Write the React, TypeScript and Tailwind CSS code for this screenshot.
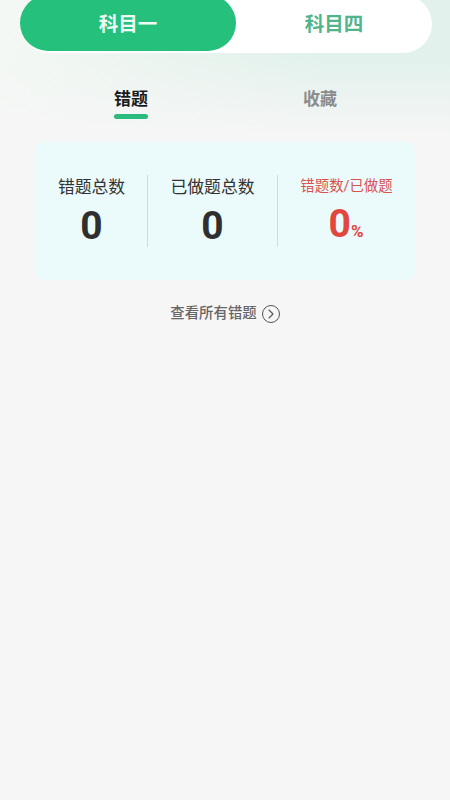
import { ChevronRight } from "lucide-react";

const stats = [
  { label: "错题总数", value: "0" },
  { label: "已做题总数", value: "0" },
];

export default function App() {
  return (
    <div className="h-[800px] w-[450px] overflow-hidden bg-[#f6f6f6] font-['Roboto','Noto_Sans_CJK_SC',sans-serif]">
      <div className="h-[155px] bg-[linear-gradient(to_bottom,rgba(246,246,246,0)_40%,#f6f6f6_92%),linear-gradient(100deg,#f4f8f4_0%,#e2f1eb_70%,#e2f1eb_100%)]">
        <div className="ml-5 -mt-[5px] flex h-[58px] w-[412px] rounded-[29px] bg-white">
          <div className="flex h-[56px] w-[216px] items-center justify-center rounded-[28px] bg-[#24c07c] pt-[3px] text-[19.5px] font-bold text-[#eefaf4]">
            科目一
          </div>
          <div className="flex h-[56px] flex-1 items-center justify-center pt-[3px] text-[19.5px] font-bold text-[#52b48c]">
            科目四
          </div>
        </div>

        <div className="mt-[32px] flex text-[17px] font-bold">
          <div className="ml-[114px] flex w-[34px] flex-col items-center">
            <span className="whitespace-nowrap leading-[28px] text-[#1b1b1b]">错题</span>
            <span className="mt-[1px] h-[5px] w-[34px] rounded-full bg-[#2bbb7e]" />
          </div>
          <span className="ml-[155px] whitespace-nowrap leading-[28px] text-[#8b8b8b]">收藏</span>
        </div>
      </div>

      <div className="ml-9 -mt-2 flex h-[138px] w-[379px] items-center rounded-lg bg-[#ebfafb]">
        {stats.map((s, i) => (
          <div
            key={s.label}
            className={
              i === 0
                ? "flex h-[72px] w-[112px] flex-col items-center border-r border-[#cfdcdd]"
                : "flex h-[72px] w-[130px] flex-col items-center border-r border-[#cfdcdd]"
            }
          >
            <span className="text-[16.8px] leading-[24px] text-[#333333]">{s.label}</span>
            <span className="mt-[4px] text-[39px] font-bold leading-[46px] text-[#2f2f2f]">{s.value}</span>
          </div>
        ))}
        <div className="flex h-[72px] flex-1 flex-col items-center">
          <span className="text-[14.4px] leading-[24px] text-[#d9534f]">错题数/已做题</span>
          <span className="mt-[2px] -ml-[1px] leading-[46px] text-[#e2463c]">
            <span className="text-[39px] font-bold">0</span>
            <span className="text-[17px] font-bold">%</span>
          </span>
        </div>
      </div>

      <div className="mt-[22px] flex items-center justify-center gap-[5px] text-[14.4px] font-medium text-[#666666]">
        <span className="leading-[24px]">查看所有错题</span>
        <span className="-mt-[1px] flex h-[18px] w-[18px] items-center justify-center rounded-full border-[1.5px] border-[#555555] text-[#555555]">
          <ChevronRight size={16} strokeWidth={1.6} />
        </span>
      </div>
    </div>
  );
}
